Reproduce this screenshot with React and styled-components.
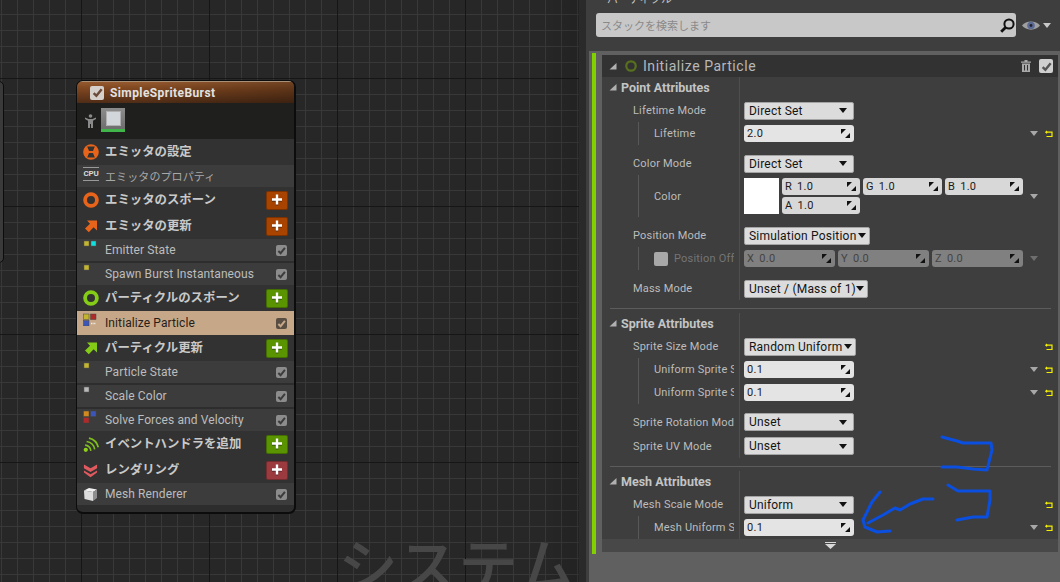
import React from 'react';
import styled, { createGlobalStyle } from 'styled-components';

const GlobalStyles = createGlobalStyle`
	html, body, #root {
		margin: 0;
		padding: 0;
		width: 1060px;
		height: 582px;
		overflow: hidden;
		background: #262626;
	}

	* {
		box-sizing: border-box;
		font-family: Roboto, "Noto Sans CJK JP", sans-serif;
	}
`;

const Page = styled.div`
	display: flex;
	width: 1060px;
	height: 582px;
`;

const Graph = styled.div`
	position: relative;
	flex: 0 0 579px;
	height: 582px;
	overflow: hidden;
	background-color: #272727;
	background-image:
		linear-gradient(90deg, transparent 540px, rgba(0, 0, 0, 0.12) 579px),
		linear-gradient(90deg, #161616 1px, transparent 1px),
		linear-gradient(#161616 1px, transparent 1px),
		linear-gradient(90deg, #383838 1px, transparent 1px),
		linear-gradient(#383838 1px, transparent 1px);
	background-size: 100% 100%, 128px 128px, 128px 128px, 16px 16px, 16px 16px;
	background-position: 0 0, 81px 78px, 81px 78px, 1px 14px, 1px 14px;
`;

const Watermark = styled.div`
	position: absolute;
	left: 338px;
	top: 521px;
	font-size: 60px;
	font-weight: 500;
	line-height: 84px;
	white-space: nowrap;
	color: #474747;
	font-family: "Noto Sans CJK JP", sans-serif;
`;

const StubNode = styled.div`
	position: absolute;
	left: -20px;
	top: 81px;
	width: 24px;
	height: 182px;
	background: #3a3a3a;
	border: 1px solid #0c0c0c;
	border-radius: 5px;
`;

const Node = styled.div`
	position: absolute;
	left: 76px;
	top: 80px;
	width: 220px;
	height: 434px;
	display: flex;
	flex-direction: column;
	background: #2d2d2d;
	border: 1px solid #0c0c0c;
	border-right-width: 2px;
	border-bottom-width: 2px;
	border-radius: 7px;
	overflow: hidden;
`;

const NodeHeader = styled.div`
	flex: 0 0 22px;
	display: flex;
	align-items: center;
	gap: 6px;
	padding-left: 13px;
	background:
		linear-gradient(90deg, rgba(0, 0, 0, 0) 30%, rgba(0, 0, 0, 0.25) 100%),
		linear-gradient(180deg, #95592e 0, #7c451f 35%, #4f2c16 100%);
	border-top: 1px solid #a89078;
	color: #e2e2e2;
	font-size: 12px;
	font-weight: 700;
	letter-spacing: 0.4px;
`;

const HeaderCheck = styled.div`
	width: 14px;
	height: 14px;
	display: flex;
	align-items: center;
	justify-content: center;
	background: ${p => p.$bg || '#d6d0cc'};
	border-radius: 2px;
`;

const ThumbRow = styled.div`
	flex: 0 0 36px;
	display: flex;
	align-items: flex-start;
	gap: 5px;
	padding: 5px 0 0 8px;
	background: #1f201d;
`;

const Thumb = styled.div`
	width: 24px;
	height: 24px;
	display: flex;
	align-items: center;
	justify-content: center;
	background: linear-gradient(#8c8c8c, #6e6e6e);
	border-bottom: 3px solid #3fb54a;
	span {
		width: 15px;
		height: 15px;
		background: #d2d7db;
		border: 1px solid #b0b0b0;
	}
`;

const Section = styled.div`
	flex: 0 0 26px;
	display: flex;
	align-items: center;
	padding: 0 6px;
	background: #323232;
	color: #c9c9c9;
	font-size: 12.4px;
	font-weight: 700;
	font-family: "Noto Sans CJK JP", sans-serif;
`;

const IconSlot = styled.div`
	flex: 0 0 22px;
	height: 18px;
	display: flex;
	align-items: center;
	justify-content: flex-start;
`;

const SectionLabel = styled.span`
	flex: 1;
	padding-bottom: 2px;
	white-space: nowrap;
`;

const AddButton = styled.div`
	width: 22px;
	height: 19px;
	display: flex;
	align-items: center;
	justify-content: center;
	background: ${p => p.$color};
	border: 1px solid rgba(0, 0, 0, 0.25);
	border-radius: 2px;
`;

const SubRow = styled.div`
	flex: 0 0 ${p => (p.$active ? 24 : 22)}px;
	margin-bottom: ${p => p.$gap || 0}px;
	display: flex;
	align-items: center;
	padding: 0 7px 0 6px;
	background: ${p => (p.$active ? '#c6a888' : '#3c3c3c')};
	color: ${p => (p.$active ? '#262018' : '#bdbdbd')};
	font-size: 12px;
	letter-spacing: 0.1px;
`;

const SubLabel = styled.span`
	flex: 1;
	white-space: nowrap;
`;

const JpSubLabel = styled(SubLabel)`
	font-size: 11px;
	padding-bottom: 1px;
	color: #a8a8a8;
	font-family: "Noto Sans CJK JP", sans-serif;
`;

const RowIcon = styled.div`
	flex: 0 0 22px;
	height: 22px;
	display: flex;
	align-items: flex-start;
`;

const RowCheck = styled.div`
	width: 11px;
	height: 11px;
	display: flex;
	align-items: center;
	justify-content: center;
	background: ${p => (p.$active ? '#5a4e42' : '#8c8c8c')};
	border-radius: 2px;
`;

const CpuBlock = styled.div`
	width: 16px;
	font-size: 8px;
	font-weight: 700;
	line-height: 8px;
	color: #d8d8d8;
	text-align: center;
	border-top: 1px solid #999;
	border-bottom: 1px solid #999;
	padding: 2px 0;
	margin-top: 2px;
	letter-spacing: -0.2px;
	font-family: Roboto, sans-serif;
`;

const Side = styled.div`
	flex: 1;
	display: flex;
	height: 582px;
	background: #2a2a2a;
	padding-left: 7px;
`;

const SideInner = styled.div`
	flex: 1;
	display: flex;
	flex-direction: column;
	background: #3e3e3e;
	padding-left: 3px;
	overflow: hidden;
`;

const TopBar = styled.div`
	flex: 0 0 51px;
	margin-left: -3px;
	padding-left: 3px;
`;

const TabTitle = styled.div`
	height: 13px;
	margin-top: -9px;
	padding-left: 18px;
	font-size: 11px;
	line-height: 15px;
	color: #c4c4c4;
	font-family: "Noto Sans CJK JP", sans-serif;
	white-space: nowrap;
`;

const SearchRow = styled.div`
	display: flex;
	align-items: center;
	padding-left: 7px;
	margin-top: 9px;
`;

const SearchBox = styled.div`
	flex: 0 0 420px;
	height: 24px;
	display: flex;
	align-items: center;
	justify-content: space-between;
	padding: 0 1px 0 5px;
	background: #c8c8c8;
	border-radius: 3px;
	color: #8a8a8a;
	font-size: 11px;
	font-family: "Noto Sans CJK JP", sans-serif;
`;

const EyeButton = styled.div`
	display: flex;
	align-items: center;
	gap: 3px;
	padding-left: 6px;
`;

const Card = styled.div`
	flex: 1;
	display: flex;
	background: #606060;
	padding-top: 2px;
`;

const GreenBar = styled.div`
	flex: 0 0 4px;
	height: 501px;
	margin-left: 3px;
	background: #83d000;
`;

const CardBody = styled.div`
	flex: 1;
	margin-left: 6px;
	margin-right: 2px;
	padding-top: 2px;
	display: flex;
	flex-direction: column;
`;

const CardHeader = styled.div`
	flex: 0 0 22px;
	display: flex;
	align-items: center;
	gap: 8px;
	padding: 0 5px 0 7px;
	background: #323232;
	color: #b8b8b8;
	font-size: 14px;
	letter-spacing: 0.55px;
`;

const HeaderTitle = styled.span`
	flex: 1;
	margin-left: -2px;
`;

const CardContent = styled.div`
	flex: 0 0 462px;
	display: flex;
	flex-direction: column;
	background: #3e3e3e;
	overflow: hidden;
`;

const Expander = styled.div`
	flex: 0 0 13px;
	display: flex;
	align-items: center;
	justify-content: center;
	background: #484848;
`;

/* one attribute group; the background draws the column divider through the gaps */
const Block = styled.div`
	display: flex;
	flex-direction: column;
	margin-top: ${p => p.$mt || 0}px;
	background: linear-gradient(#4e4e4e, #4e4e4e) 137px 0 / 1px 100% no-repeat;
`;

const Row = styled.div`
	flex: 0 0 ${p => p.$h || 23}px;
	display: flex;
	align-items: center;
	margin-top: ${p => p.$mt || 0}px;
`;

const LabelCell = styled.div`
	flex: 0 0 138px;
	align-self: stretch;
	display: flex;
	align-items: center;
	padding-left: 31px;
	overflow: hidden;
`;

const Label = styled.span`
	display: block;
	width: ${p => p.$w || 101}px;
	overflow: hidden;
	white-space: nowrap;
	color: ${p => (p.$off ? '#757575' : '#bcbcbc')};
	font-size: 11px;
	letter-spacing: 0.2px;
`;

const Branch = styled.div`
	flex: 1;
	align-self: stretch;
	display: flex;
	align-items: center;
	gap: 6px;
	min-width: 0;
	padding-left: 15px;
	margin-left: 5px;
	border-left: 1px solid #585858;
`;

const GroupTitle = styled.div`
	flex: 0 0 138px;
	display: flex;
	align-items: center;
	gap: 4px;
	padding: 0 0 2px 7px;
	color: #c4c4c4;
	font-size: 12.5px;
	font-weight: 700;
`;

const ValueCell = styled.div`
	flex: 1;
	display: flex;
	align-items: center;
	padding-left: 4px;
	min-width: 0;
`;

const Select = styled.div`
	flex: 0 0 ${p => p.$w || 110}px;
	height: 18px;
	display: flex;
	align-items: center;
	justify-content: space-between;
	padding: 0 ${p => (p.$tight ? 3 : 6)}px 0 4px;
	background: #dcdcdc;
	border: 1px solid #a4a4a4;
	border-radius: 2px;
	color: #141414;
	font-size: 12px;
	letter-spacing: 0.2px;
	white-space: nowrap;
`;

const NumberBox = styled.div`
	flex: 0 0 ${p => p.$w || 110}px;
	height: 17px;
	display: flex;
	align-items: center;
	justify-content: space-between;
	padding: 0 4px 0 3px;
	background: ${p => (p.$off ? '#808080' : p.$axis ? '#d8d8d8' : '#e4e4e4')};
	border-radius: 3px;
	color: ${p => (p.$off ? '#444' : '#1a1a1a')};
	font-size: 11px;
	letter-spacing: 0.3px;
`;

const NumberText = styled.span`
	display: flex;
	gap: 5px;
`;

const Swatch = styled.div`
	flex: 0 0 35px;
	height: 36px;
	background: #fff;
`;

const ColorGrid = styled.div`
	display: grid;
	grid-template-columns: 78px 79px 78px;
	grid-auto-rows: 17px;
	gap: 2px 3px;
	margin-left: 3px;
`;

const AxisRow = styled.div`
	display: flex;
	gap: 3px;
`;

const OffCheck = styled.div`
	flex: 0 0 14px;
	height: 14px;
	background: #a8a8a8;
	border-radius: 2px;
`;

const Trailing = styled.div`
	margin-left: auto;
	flex: 0 0 28px;
	display: flex;
	align-items: center;
	justify-content: space-between;
	padding-right: 5px;
`;

const Separator = styled.div`
	flex: 0 0 1px;
	margin: 8px 7px 0 8px;
	background: #5c5c5c;
`;

const Freehand = styled.svg`
	position: absolute;
	left: 0;
	top: 0;
	pointer-events: none;
`;

const Check = ({ size = 9, color = '#3c3c3c' }) => (
	<svg width={size} height={size} viewBox="0 0 10 10">
		<path d="M1.5 5.5 L4 8 L8.8 2" fill="none" stroke={color} strokeWidth="2.2" />
	</svg>
);

const Plus = () => (
	<svg width="12" height="12" viewBox="0 0 12 12">
		<path d="M1 6.5h10M6 1.5v10" stroke="#222" strokeWidth="2.4" opacity="0.55" />
		<path d="M1 5.5h10M6 .5v10" stroke="#fff" strokeWidth="2.4" />
	</svg>
);

const GearIcon = () => (
	<svg width="16" height="16" viewBox="0 0 16 16">
		<circle cx="8" cy="8" r="7.8" fill="#e8641b" />
		<path d="M4.200 2.400h7.600L10 6.900H6zM6 9.100h4l1.800 4.500H4.200z" fill="#323232" />
	</svg>
);

const Ring = ({ color, size = 16, width = 3.8 }) => (
	<svg width={size} height={size} viewBox="0 0 16 16">
		<circle cx="8" cy="8" r={7.8 - width / 2} fill="none" stroke={color} strokeWidth={width} />
	</svg>
);

const ArrowIcon = ({ color }) => (
	<svg width="14" height="14" viewBox="0 0 14 14" style={{ marginLeft: 1 }}>
		<path d="M3 1.500h10v10l-3.400-3.200-4.800 5L1 9.600l5-4.800z" fill={color} />
	</svg>
);

const EventIcon = () => (
	<svg width="17" height="17" viewBox="0 0 16 16" fill="none" stroke="#7fbf1a" strokeWidth="1.6">
		<circle cx="2.600" cy="13" r="2" fill="#8fd01a" stroke="none" />
		<path d="M2 8.600a5.600 5.600 0 0 1 5.400 5.400M3.400 5.200A9 9 0 0 1 11 12.600M5.600 2a11.600 11.600 0 0 1 8.800 8.600" />
	</svg>
);

const RenderIcon = () => (
	<svg width="15" height="15" viewBox="0 0 16 15" fill="#e05a5f">
		<path d="M1 1l7 4 7-4v4l-7 4-7-4z" />
		<path d="M1 7.500l7 4 7-4v2.200L8 14.600 1 9.700z" />
	</svg>
);

const Dots = ({ colors }) => (
	<svg width="16" height="10" viewBox="0 0 16 10">
		{colors.map((c, i) => (
			<rect key={c + i} x={1 + i * 7} y="2" width="5" height="5" fill={c} stroke="#555" strokeWidth="0.5" />
		))}
	</svg>
);

const ModuleIcon = ({ active }) => (
	<svg width="14" height="14" viewBox="0 0 14 14">
		<rect x="0.500" y="2" width="5.500" height="5.500" fill={active ? '#c4b52e' : '#d18a1e'} stroke="#444" strokeWidth="0.5" />
		<rect x="7.500" y="2" width="5.500" height="5.500" fill={active ? '#b02a2a' : '#3c55b8'} stroke="#444" strokeWidth="0.5" />
		<rect x="0.500" y="8.500" width="5.500" height="5.500" fill={active ? '#3c55b8' : '#b02a2a'} stroke="#444" strokeWidth="0.5" />
		{active && <path d="M8 11.500h5" stroke="#eee" strokeWidth="1.400" strokeDasharray="1 .6" />}
	</svg>
);

const CubeIcon = () => (
	<svg width="15" height="15" viewBox="0 0 15 15" style={{ marginTop: 4 }}>
		<path d="M1 3.500 6 1l8 1.500-4 2.500z" fill="#f2f2f2" />
		<path d="M1 3.500 10 5v9L1.500 12z" fill="#dcdcdc" />
		<path d="M10 5l4-2.500V11l-4 3z" fill="#8e8e8e" />
	</svg>
);

const PersonIcon = () => (
	<svg width="11" height="15" viewBox="0 0 11 15" style={{ marginTop: 6 }} fill="#8a8a8a">
		<circle cx="5.500" cy="2" r="1.800" />
		<path d="M0 3.500 3.500 5h4L11 3.500v1.500L8 6.800V14H6V10H5v4H3V6.800L0 5z" />
	</svg>
);

const Tri = ({ color = '#b0b0b0', size = 8 }) => (
	<svg width={size} height={size} viewBox="0 0 8 8">
		<path d="M7.500 1v6.500H.5z" fill={color} />
	</svg>
);

const Caret = ({ color = '#111', w = 8, h = 5 }) => (
	<svg width={w} height={h} viewBox="0 0 8 5">
		<path d="M0 0h8L4 5z" fill={color} />
	</svg>
);

const Spinner = ({ color = '#111' }) => (
	<svg width="9" height="9" viewBox="0 0 9 9" fill={color}>
		<path d="M0 0h5L0 5zM9 9H4l5-5z" />
	</svg>
);

const ResetArrow = () => (
	<svg width="8" height="8" viewBox="0 0 8 8" fill="none" stroke="#f4f000" strokeWidth="1.200">
		<path d="M2 1 .8 2.200 2 3.400M1 2.200h6v4.300H1.500" />
	</svg>
);

const Magnifier = () => (
	<svg width="15" height="15" viewBox="0 0 15 15" fill="none" stroke="#111" strokeWidth="2">
		<circle cx="9" cy="6" r="4.600" />
		<path d="M5.500 9.500 1.200 13.800" strokeWidth="2.800" />
	</svg>
);

const Eye = () => (
	<svg width="18" height="11" viewBox="0 0 18 11">
		<path d="M0 5.500C4 0 14 0 18 5.500 14 11 4 11 0 5.500z" fill="#a0a0a0" />
		<circle cx="9" cy="5.500" r="3.800" fill="#5a6a94" />
		<circle cx="9" cy="5.500" r="1.400" fill="#223" />
	</svg>
);

const Trash = () => (
	<svg width="10" height="12" viewBox="0 0 10 12" fill="#a8a8a8">
		<path d="M0 1.500h10v1.200H0zM3.500 0h3v1.500h-3z" />
		<path d="M1 3.500h8V12H1zM3 5v5.500h1V5zm3 0v5.500h1V5z" fillRule="evenodd" />
	</svg>
);

const Reset = ({ caret = true }) => (
	<Trailing>
		{caret ? <Caret color="#a8a8a8" /> : <span />}
		<ResetArrow />
	</Trailing>
);

const Num = ({ axis, value, ...rest }) => (
	<NumberBox {...rest}>
		<NumberText>
			{axis && <span>{axis}</span>}
			<span>{value}</span>
		</NumberText>
		<Spinner />
	</NumberBox>
);

const Group = ({ children }) => (
	<Row $h={22}>
		<GroupTitle>
			<Tri />
			{children}
		</GroupTitle>
	</Row>
);

const Field = ({ label, children, mt, h }) => (
	<Row $mt={mt} $h={h}>
		<LabelCell>
			<Label>{label}</Label>
		</LabelCell>
		<ValueCell>{children}</ValueCell>
	</Row>
);

const ChildField = ({ label, children, mt, h, prefix, off }) => (
	<Row $mt={mt} $h={h}>
		<LabelCell>
			<Branch>
				{prefix}
				<Label $w={prefix ? 60 : 80} $off={off}>
					{label}
				</Label>
			</Branch>
		</LabelCell>
		<ValueCell>{children}</ValueCell>
	</Row>
);

const emitterRows = [
	{ label: 'Emitter State', colors: ['#c4b52e', '#10e0e0'], gap: 2 },
	{ label: 'Spawn Burst Instantaneous', colors: ['#c4b52e'] },
];

const App = () => {
	return (
		<Page>
			<GlobalStyles />
			<Graph>
				<Watermark>システム</Watermark>
				<StubNode />
				<Node>
					<NodeHeader>
						<HeaderCheck>
							<Check size={11} color="#6b4a38" />
						</HeaderCheck>
						SimpleSpriteBurst
					</NodeHeader>
					<ThumbRow>
						<PersonIcon />
						<Thumb>
							<span />
						</Thumb>
					</ThumbRow>
					<Section>
						<IconSlot>
							<GearIcon />
						</IconSlot>
						<SectionLabel>エミッタの設定</SectionLabel>
					</Section>
					<SubRow>
						<RowIcon>
							<CpuBlock>CPU</CpuBlock>
						</RowIcon>
						<JpSubLabel>エミッタのプロパティ</JpSubLabel>
					</SubRow>
					<Section>
						<IconSlot>
							<Ring color="#e8641b" />
						</IconSlot>
						<SectionLabel>エミッタのスポーン</SectionLabel>
						<AddButton $color="#a84300">
							<Plus />
						</AddButton>
					</Section>
					<Section>
						<IconSlot>
							<ArrowIcon color="#e8641b" />
						</IconSlot>
						<SectionLabel>エミッタの更新</SectionLabel>
						<AddButton $color="#a84300">
							<Plus />
						</AddButton>
					</Section>
					{emitterRows.map(r => (
						<SubRow key={r.label} $gap={r.gap}>
							<RowIcon>
								<Dots colors={r.colors} />
							</RowIcon>
							<SubLabel>{r.label}</SubLabel>
							<RowCheck>
								<Check />
							</RowCheck>
						</SubRow>
					))}
					<Section>
						<IconSlot>
							<Ring color="#84cc16" />
						</IconSlot>
						<SectionLabel>パーティクルのスポーン</SectionLabel>
						<AddButton $color="#5a9400">
							<Plus />
						</AddButton>
					</Section>
					<SubRow $active>
						<RowIcon>
							<ModuleIcon active />
						</RowIcon>
						<SubLabel>Initialize Particle</SubLabel>
						<RowCheck $active>
							<Check color="#c6a888" />
						</RowCheck>
					</SubRow>
					<Section>
						<IconSlot>
							<ArrowIcon color="#84cc16" />
						</IconSlot>
						<SectionLabel>パーティクル更新</SectionLabel>
						<AddButton $color="#5a9400">
							<Plus />
						</AddButton>
					</Section>
					<SubRow $gap={2}>
						<RowIcon>
							<Dots colors={['#c4b52e']} />
						</RowIcon>
						<SubLabel>Particle State</SubLabel>
						<RowCheck>
							<Check />
						</RowCheck>
					</SubRow>
					<SubRow $gap={2}>
						<RowIcon>
							<Dots colors={['#b8b8b8']} />
						</RowIcon>
						<SubLabel>Scale Color</SubLabel>
						<RowCheck>
							<Check />
						</RowCheck>
					</SubRow>
					<SubRow>
						<RowIcon>
							<ModuleIcon />
						</RowIcon>
						<SubLabel>Solve Forces and Velocity</SubLabel>
						<RowCheck>
							<Check />
						</RowCheck>
					</SubRow>
					<Section>
						<IconSlot>
							<EventIcon />
						</IconSlot>
						<SectionLabel>イベントハンドラを追加</SectionLabel>
						<AddButton $color="#5a9400">
							<Plus />
						</AddButton>
					</Section>
					<Section>
						<IconSlot>
							<RenderIcon />
						</IconSlot>
						<SectionLabel>レンダリング</SectionLabel>
						<AddButton $color="#9b3b3f">
							<Plus />
						</AddButton>
					</Section>
					<SubRow>
						<RowIcon>
							<CubeIcon />
						</RowIcon>
						<SubLabel>Mesh Renderer</SubLabel>
						<RowCheck>
							<Check />
						</RowCheck>
					</SubRow>
				</Node>
			</Graph>
			<Side>
				<SideInner>
					<TopBar>
						<TabTitle>パーティクル</TabTitle>
						<SearchRow>
							<SearchBox>
								<span>スタックを検索します</span>
								<Magnifier />
							</SearchBox>
							<EyeButton>
								<Eye />
								<Caret color="#c8c8c8" />
							</EyeButton>
						</SearchRow>
					</TopBar>
					<Card>
						<GreenBar />
						<CardBody>
							<CardHeader>
								<Tri />
								<Ring color="#58701e" size={12} width={3} />
								<HeaderTitle>Initialize Particle</HeaderTitle>
								<Trash />
								<HeaderCheck $bg="#cfcfcf">
									<Check size={11} color="#555" />
								</HeaderCheck>
							</CardHeader>
							<CardContent>
								<Block>
									<Group>Point Attributes</Group>
									<Field label="Lifetime Mode">
										<Select>
											Direct Set
											<Caret />
										</Select>
									</Field>
									<ChildField label="Lifetime">
										<Num value="2.0" />
										<Reset />
									</ChildField>
									<Field label="Color Mode" mt={7}>
										<Select>
											Direct Set
											<Caret />
										</Select>
									</Field>
									<ChildField label="Color" h={42}>
										<Swatch />
										<ColorGrid>
											<Num axis="R" value="1.0" $axis $w={78} />
											<Num axis="G" value="1.0" $axis $w={79} />
											<Num axis="B" value="1.0" $axis $w={78} />
											<Num axis="A" value="1.0" $axis $w={78} />
										</ColorGrid>
										<Trailing>
											<Caret color="#a8a8a8" />
											<span />
										</Trailing>
									</ChildField>
									<Field label="Position Mode" mt={7}>
										<Select $w={126} $tight>
											Simulation Position
											<Caret />
										</Select>
									</Field>
									<ChildField label="Position Off" prefix={<OffCheck />} off>
										<AxisRow>
											<Num axis="X" value="0.0" $off $w={91} />
											<Num axis="Y" value="0.0" $off $w={91} />
											<Num axis="Z" value="0.0" $off $w={91} />
										</AxisRow>
										<Trailing>
											<Caret color="#6e6e6e" />
											<span />
										</Trailing>
									</ChildField>
									<Field label="Mass Mode" mt={7}>
										<Select $w={123} $tight>
											Unset / (Mass of 1)
											<Caret />
										</Select>
									</Field>
								</Block>
								<Separator />
								<Block $mt={4}>
									<Group>Sprite Attributes</Group>
									<Field label="Sprite Size Mode">
										<Select $w={112} $tight>
											Random Uniform
											<Caret />
										</Select>
										<Reset caret={false} />
									</Field>
									<ChildField label="Uniform Sprite S">
										<Num value="0.1" />
										<Reset />
									</ChildField>
									<ChildField label="Uniform Sprite S">
										<Num value="0.1" />
										<Reset />
									</ChildField>
									<Field label="Sprite Rotation Mod" mt={6} h={24}>
										<Select>
											Unset
											<Caret />
										</Select>
									</Field>
									<Field label="Sprite UV Mode" h={24}>
										<Select>
											Unset
											<Caret />
										</Select>
									</Field>
								</Block>
								<Separator />
								<Block $mt={4}>
									<Group>Mesh Attributes</Group>
									<Field label="Mesh Scale Mode">
										<Select>
											Uniform
											<Caret />
										</Select>
										<Reset caret={false} />
									</Field>
									<ChildField label="Mesh Uniform S">
										<Num value="0.1" />
										<Reset />
									</ChildField>
								</Block>
							</CardContent>
							<Expander>
								<svg width="11" height="7" viewBox="0 0 11 7" fill="#d8d8d8">
									<path d="M0 0h11v1H0zM0 2h11L5.500 7z" />
								</svg>
							</Expander>
						</CardBody>
					</Card>
				</SideInner>
			</Side>
			<Freehand width="1060" height="582" viewBox="0 0 1060 582" fill="none" stroke="#0a4fe0" strokeWidth="3" strokeLinecap="round" strokeLinejoin="round">
				<path d="M942 437 957 441 963 443 991 443 992 450 987 470 973 469 957 467 942 467" />
				<path d="M948 485 958 491 990 491 990 500 987 517 973 517 957 520" />
				<path d="M933 499 923 499 910 504 900 510 895 508 883 515 868 523" />
				<path d="M880 492 872 502 863 520 865 527 877 532 890 531" />
			</Freehand>
		</Page>
	);
};

export default App;
